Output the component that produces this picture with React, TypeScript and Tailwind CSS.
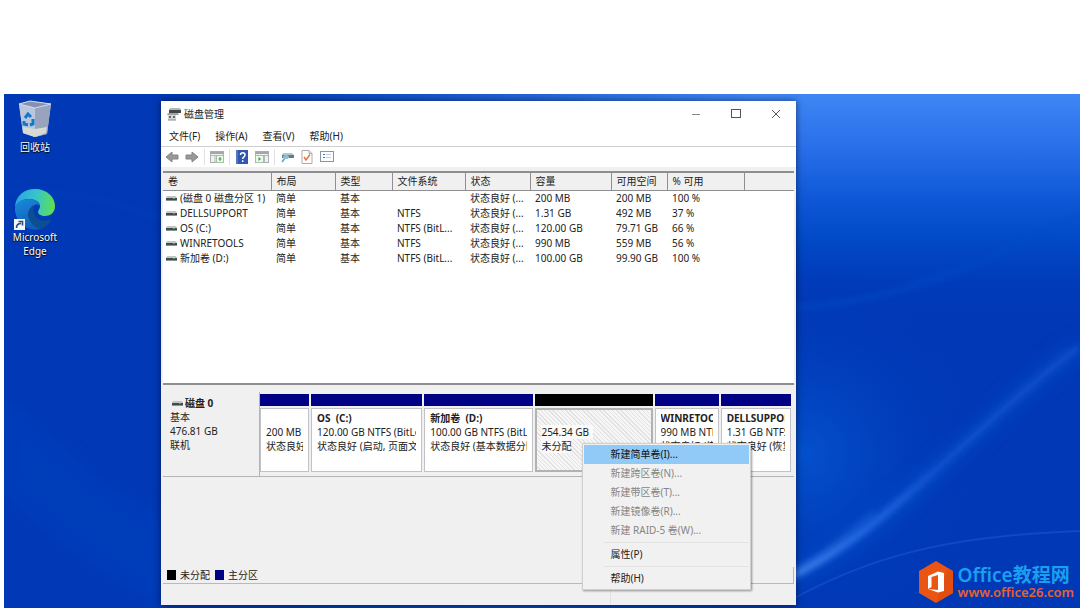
import React from "react";

type Volume = {
  name: string;
  layout: string;
  type: string;
  fs: string;
  status: string;
  capacity: string;
  free: string;
  percent: string;
};

const volumes: Volume[] = [
  { name: "(磁盘 0 磁盘分区 1)", layout: "简单", type: "基本", fs: "", status: "状态良好 (...", capacity: "200 MB", free: "200 MB", percent: "100 %" },
  { name: "DELLSUPPORT", layout: "简单", type: "基本", fs: "NTFS", status: "状态良好 (...", capacity: "1.31 GB", free: "492 MB", percent: "37 %" },
  { name: "OS (C:)", layout: "简单", type: "基本", fs: "NTFS (BitL...", status: "状态良好 (...", capacity: "120.00 GB", free: "79.71 GB", percent: "66 %" },
  { name: "WINRETOOLS", layout: "简单", type: "基本", fs: "NTFS", status: "状态良好 (...", capacity: "990 MB", free: "559 MB", percent: "56 %" },
  { name: "新加卷 (D:)", layout: "简单", type: "基本", fs: "NTFS (BitL...", status: "状态良好 (...", capacity: "100.00 GB", free: "99.90 GB", percent: "100 %" },
];

const columns = [
  { label: "卷", width: "w-[108px]" },
  { label: "布局", width: "w-16" },
  { label: "类型", width: "w-[57px]" },
  { label: "文件系统", width: "w-[73px]" },
  { label: "状态", width: "w-[65px]" },
  { label: "容量", width: "w-[81px]" },
  { label: "可用空间", width: "w-14" },
  { label: "% 可用", width: "w-[77px]" },
  { label: "", width: "" },
];

function Wallpaper() {
  return (
    <svg className="absolute inset-0 h-full w-full" viewBox="0 0 1076 514" preserveAspectRatio="none" aria-hidden="true">
      <defs>
        <linearGradient id="sky" x1="0" y1="0" x2="0" y2="1">
          <stop offset="0" stopColor="#3f86f4" />
          <stop offset="0.1" stopColor="#2a70ea" />
          <stop offset="0.2" stopColor="#0f59d8" />
          <stop offset="0.27" stopColor="#024cca" />
          <stop offset="0.38" stopColor="#003cb9" stopOpacity="0.7" />
          <stop offset="0.5" stopColor="#0038b6" stopOpacity="0" />
        </linearGradient>
        <linearGradient id="skyFade" x1="0" y1="0" x2="1" y2="0">
          <stop offset="0.2" stopColor="#000" />
          <stop offset="0.7" stopColor="#fff" />
        </linearGradient>
        <mask id="skyMask">
          <rect width="1076" height="514" fill="url(#skyFade)" />
        </mask>
        <radialGradient id="glow">
          <stop offset="0" stopColor="#0450cc" />
          <stop offset="1" stopColor="#0038b6" stopOpacity="0" />
        </radialGradient>
        <linearGradient id="beam" gradientUnits="userSpaceOnUse" x1="780" y1="490" x2="1076" y2="250">
          <stop offset="0" stopColor="#5a9fff" />
          <stop offset="0.25" stopColor="#2f78ee" />
          <stop offset="0.5" stopColor="#0f55d0" />
          <stop offset="1" stopColor="#0a50cc" />
        </linearGradient>
        <filter id="soft" x="-20%" y="-20%" width="140%" height="140%">
          <feGaussianBlur stdDeviation="3" />
        </filter>
        <filter id="wide" x="-20%" y="-20%" width="140%" height="140%">
          <feGaussianBlur stdDeviation="9" />
        </filter>
      </defs>
      <rect width="1076" height="514" fill="#0038b5" />
      <rect width="1076" height="514" fill="url(#sky)" mask="url(#skyMask)" />
      <ellipse cx="800" cy="360" rx="190" ry="190" fill="url(#glow)" />
      <ellipse cx="500" cy="530" rx="320" ry="60" fill="url(#glow)" />
      <path d="M780 214 C880 210 960 180 1076 120" fill="none" stroke="#0a4cc6" strokeWidth="3" filter="url(#soft)" />
      <path d="M0 96 C60 96 110 106 160 126" fill="none" stroke="#0844c0" strokeWidth="3" opacity="0.6" filter="url(#soft)" />
      <path d="M0 300 C40 330 80 390 160 420 L160 514 C100 480 40 440 0 400Z" fill="#0648c4" opacity="0.3" filter="url(#wide)" />
      <path d="M780 486 C880 440 960 340 1076 252" fill="none" stroke="#0b55d2" strokeWidth="16" opacity="0.5" filter="url(#wide)" />
      <path d="M780 486 C880 440 960 340 1076 252" fill="none" stroke="url(#beam)" strokeWidth="5" filter="url(#soft)" />
      <path d="M785 478 C815 464 835 448 870 418" fill="none" stroke="#4a92ff" strokeWidth="2" opacity="0.6" filter="url(#soft)" />
      <path d="M780 510 C860 464 940 442 1076 437" fill="none" stroke="#1a5cd8" strokeWidth="2" opacity="0.5" />
    </svg>
  );
}

function RecycleBin() {
  return (
    <svg width="34" height="38" viewBox="0 0 34 38" aria-hidden="true">
      <path d="M1 4 L12 1 L33 4 L29 34 L17 37 L5 33Z" fill="#aeb9cf" />
      <path d="M1 4 L17 8 L17 37 L5 33Z" fill="#b9c6de" />
      <path d="M17 8 L33 4 L29 34 L17 37Z" fill="#98a4bd" />
      <path d="M1 4 L12 1 L33 4 L17 8Z" fill="#8391b2" stroke="#d3dcec" strokeWidth="1" />
      <path d="M5 27 L17 29 L29 27 L28 33 L17 37 L5 33Z" fill="#d9d9d4" />
      <g fill="none" stroke="#1279c9" strokeWidth="3">
        <path d="M7 18 L10 14 L13 17" />
        <path d="M15 19 L15 24 L12 25" />
        <path d="M10 25 L6 24 L6 21" />
      </g>
    </svg>
  );
}

function EdgeLogo() {
  return (
    <svg width="42" height="42" viewBox="0 0 42 42" aria-hidden="true">
      <defs>
        <linearGradient id="edgeTop" x1="0" y1="0.4" x2="1" y2="0.5">
          <stop offset="0" stopColor="#2aa5e0" />
          <stop offset="0.5" stopColor="#35c4cd" />
          <stop offset="1" stopColor="#5fe04f" />
        </linearGradient>
        <linearGradient id="edgeLeft" x1="0" y1="0" x2="0.4" y2="1">
          <stop offset="0" stopColor="#1a8bdd" />
          <stop offset="1" stopColor="#0f5fb9" />
        </linearGradient>
      </defs>
      <path d="M1 20 C1 8 10 1 21 1 C33 1 41 9 41 18 C41 25 36 28 31 28 C27 28 24 26 24 24 C24 22 26 21 26 18 C26 14 21 11 15 11 C8 11 2 15 1 20Z" fill="url(#edgeTop)" />
      <path d="M1 20 C2 14 8 11 15 11 C21 11 26 14 26 18 C25 17 23 16 21 17 C16 18 14 24 16 30 C18 36 22 40 27 41 C12 44 1 34 1 20Z" fill="url(#edgeLeft)" />
      <path d="M21 17 C16 18 12 25 15 31 C18 38 24 41 27 41 C32 39 36 35 38 31 C34 33 24 34 21 27 C19 23 20 19 21 17Z" fill="#0b4f92" />
    </svg>
  );
}

function DriveIcon() {
  return (
    <svg className="shrink-0" width="11" height="5" viewBox="0 0 11 5" aria-hidden="true">
      <path d="M1 0 H10 L11 2 H0Z" fill="#c0c8c6" />
      <rect y="2" width="11" height="2" fill="#414b49" />
      <rect y="4" width="11" height="1" fill="#8b9492" />
      <rect x="7" y="2" width="2" height="1" fill="#4fa56a" />
    </svg>
  );
}

function AppIcon() {
  return (
    <svg width="14" height="14" viewBox="0 0 14 14" aria-hidden="true">
      <path d="M3 1 H13 L14 3 H2Z" fill="#b5b8ba" />
      <rect x="2" y="3" width="12" height="3" fill="#42474a" />
      <path d="M1 6 H11 L12 8 H0Z" fill="#a0a4a6" />
      <rect x="1" y="8" width="8" height="5" fill="#d5d7d8" />
      <rect x="2" y="9" width="2" height="2" fill="#63686b" />
      <rect x="6" y="9" width="2" height="2" fill="#63686b" />
      <path d="M1 13 H9" stroke="#85898b" />
    </svg>
  );
}

function Arrow({ forward = false }: { forward?: boolean }) {
  return (
    <svg width="14" height="12" viewBox="0 0 14 12" aria-hidden="true">
      <path
        d={forward ? "M13 6 L7 1 V4 H1 V8 H7 V11Z" : "M1 6 L7 1 V4 H13 V8 H7 V11Z"}
        fill="#999"
        stroke="#858585"
        strokeWidth="1"
        strokeLinejoin="round"
      />
    </svg>
  );
}

function TreeIcon() {
  return (
    <svg width="14" height="12" viewBox="0 0 14 12" aria-hidden="true">
      <rect x="0.5" y="0.5" width="13" height="11" fill="#f0f1f1" stroke="#aaadb0" />
      <rect x="1" y="1" width="12" height="2" fill="#a3a7aa" />
      <path d="M1 4.5 H13 M5 4 V11" stroke="#b5b9bc" />
      <rect x="6.500" y="4.500" width="7" height="7" fill="#eef8ee" stroke="#9cc5a0" />
      <path d="M10 6 V10 M8.500 8 H11.500" stroke="#3e9a49" />
    </svg>
  );
}

function ActionPaneIcon() {
  return (
    <svg width="14" height="12" viewBox="0 0 14 12" aria-hidden="true">
      <rect x="0.5" y="0.5" width="13" height="11" fill="#f0f1f1" stroke="#aaadb0" />
      <rect x="1" y="1" width="12" height="2" fill="#a3a7aa" />
      <path d="M1 4.5 H13 M9.500 4 V11" stroke="#b5b9bc" />
      <rect x="0.5" y="4.500" width="8" height="7" fill="#eef8ee" stroke="#9cc5a0" />
      <path d="M3.500 6 L6 8 L3.500 10Z" fill="#3e9a49" />
    </svg>
  );
}

function HelpIcon() {
  return (
    <svg width="12" height="14" viewBox="0 0 12 14" aria-hidden="true">
      <rect width="12" height="14" fill="#3158ae" />
      <rect width="2" height="14" fill="#5475bf" />
      <path d="M4.500 5 C4.500 2 9 2 9 5 C9 7 6.700 6.800 6.700 9 M6.700 10.200 V12" fill="none" stroke="#fff" strokeWidth="1.500" />
    </svg>
  );
}

function RescanIcon() {
  return (
    <svg width="14" height="12" viewBox="0 0 14 12" aria-hidden="true">
      <path d="M3 2 H12 L14 4 H2Z" fill="#b5c6cf" />
      <rect x="2" y="4" width="12" height="3" fill="#5f7c8b" />
      <path d="M5 7 L2 11" stroke="#78abc6" strokeWidth="2" />
      <ellipse cx="6" cy="6" rx="3" ry="2" fill="#8fbdd2" />
    </svg>
  );
}

function CheckPageIcon() {
  return (
    <svg width="12" height="14" viewBox="0 0 12 14" aria-hidden="true">
      <path d="M1 0.5 H8 L11 3.500 V13.500 H1Z" fill="#fff" stroke="#b0aba8" />
      <path d="M8 0.5 V3.500 H11" fill="#ddd" stroke="#b0aba8" />
      <path d="M3 7 L5 10 L9 4.500" fill="none" stroke="#e2783f" strokeWidth="1.500" />
    </svg>
  );
}

function ListIcon() {
  return (
    <svg width="14" height="12" viewBox="0 0 14 12" aria-hidden="true">
      <rect x="0.5" y="0.5" width="13" height="10" fill="#fbfcfd" stroke="#8598a8" />
      <path d="M3 3.500 H5 M3 6.500 H5" stroke="#4479a8" />
      <path d="M6 3.500 H11 M6 6.500 H11" stroke="#c5ced6" />
    </svg>
  );
}

function ToolButton({ label, children }: { label: string; children: React.ReactNode }) {
  return (
    <button type="button" aria-label={label} className="flex h-4 w-5 items-center justify-center">
      {children}
    </button>
  );
}

function Divider() {
  return <span className="mx-0.5 h-4 w-px bg-[#e2e2e2]" />;
}

function DesktopShortcut({ label, children }: { label: string; children: React.ReactNode }) {
  return (
    <button
      type="button"
      className="flex w-[62px] flex-col items-center text-center text-[10px] leading-[14px] text-white [text-shadow:0_1px_1px_#000,1px_0_1px_#0008]"
    >
      {children}
      <span>{label}</span>
    </button>
  );
}

type BlockProps = {
  title?: string;
  size: string;
  status: string;
  unallocated?: boolean;
  children?: React.ReactNode;
};

function PartitionBlock({ title, size, status, unallocated = false, children }: BlockProps) {
  return (
    <div className="relative flex flex-col">
      <div className={unallocated ? "h-3 bg-black" : "h-3 bg-[#000084]"} />
      <div
        className={
          unallocated
            ? "mt-0.5 h-16 overflow-hidden border-2 border-[#b2b2b2] bg-[repeating-linear-gradient(45deg,#f6f6f6_0_2px,#e2e2e2_2px_3px)] pt-px pl-1 leading-[14px] whitespace-nowrap"
            : "mt-0.5 h-16 border border-[#c2c2c6] bg-white px-[5px] pt-0.5 leading-[14px] whitespace-nowrap"
        }
      >
        <div className="overflow-hidden">
          <div className="h-3.5 font-bold whitespace-pre">{title}</div>
          <div>
            <span className={unallocated ? "bg-[#fafafa] pr-1" : ""}>{size}</span>
          </div>
          <div>
            <span className={unallocated ? "bg-[#fafafa]" : ""}>{status}</span>
          </div>
        </div>
      </div>
      {children}
    </div>
  );
}

function MenuItem({ label, active = false, disabled = false }: { label: string; active?: boolean; disabled?: boolean }) {
  return (
    <button
      type="button"
      role="menuitem"
      disabled={disabled}
      className={
        active
          ? "flex h-[19px] w-full items-center bg-[#91c9f7] pl-[26px] text-[#111]"
          : "flex h-[19px] w-full items-center pl-[26px] text-[#222] disabled:text-[#858585]"
      }
    >
      {label}
    </button>
  );
}

function ContextMenu() {
  return (
    <div
      role="menu"
      className="absolute top-[49px] left-[47px] z-10 w-[169px] border border-[#d0d0d0] bg-[#f1f1f2] p-px shadow-[1px_1px_2px_#0006]"
    >
      <MenuItem label="新建简单卷(I)..." active />
      <MenuItem label="新建跨区卷(N)..." disabled />
      <MenuItem label="新建带区卷(T)..." disabled />
      <MenuItem label="新建镜像卷(R)..." disabled />
      <MenuItem label="新建 RAID-5 卷(W)..." disabled />
      <div className="my-0.5 ml-5 h-px bg-[#e3e3e3]" />
      <MenuItem label="属性(P)" />
      <div className="my-0.5 ml-5 h-px bg-[#e3e3e3]" />
      <MenuItem label="帮助(H)" />
    </div>
  );
}

function VolumeTable() {
  return (
    <div className="h-[212px] border-t-2 border-[#8e8e90] bg-white">
      <table className="w-full table-fixed border-collapse text-left leading-[15px]">
        <thead>
          <tr className="h-[17px] bg-[#f0f0f1]">
            {columns.map((c, i) => (
              <th
                key={i}
                scope="col"
                className={`${c.width} border-r border-b border-[#8f8f91] pl-[5px] font-normal whitespace-nowrap last:border-r-0`}
              >
                {c.label}
              </th>
            ))}
          </tr>
        </thead>
        <tbody>
          {volumes.map((v) => (
            <tr key={v.name} className="h-[15px] whitespace-nowrap [&>td]:pl-[5px]">
              <td>
                <span className="-ml-0.5 flex items-center gap-[3px]">
                  <DriveIcon />
                  {v.name}
                </span>
              </td>
              <td>{v.layout}</td>
              <td>{v.type}</td>
              <td>{v.fs}</td>
              <td>{v.status}</td>
              <td>{v.capacity}</td>
              <td>{v.free}</td>
              <td>{v.percent}</td>
              <td />
            </tr>
          ))}
        </tbody>
      </table>
    </div>
  );
}

function DiskRow() {
  return (
    <section className="flex border-b border-[#b5b5b8]" aria-label="磁盘 0">
      <div className="w-[97px] border-r border-[#b5b5b8] pt-1 pl-[7px] leading-[14px]">
        <h2 className="flex items-center gap-0.5 pl-0.5 font-bold">
          <DriveIcon />
          磁盘 0
        </h2>
        <p>基本</p>
        <p>476.81 GB</p>
        <p>联机</p>
      </div>
      <div className="grid min-w-0 flex-1 grid-cols-[49fr_111fr_109fr_117fr_64fr_70fr] gap-0.5 pt-0.5 pr-[3px] pb-1 [&>*]:min-w-0">
        <PartitionBlock size="200 MB" status="状态良好 (EFI" />
        <PartitionBlock title="OS  (C:)" size="120.00 GB NTFS (BitLocker" status="状态良好 (启动, 页面文件" />
        <PartitionBlock title="新加卷  (D:)" size="100.00 GB NTFS (BitLocker" status="状态良好 (基本数据分区)" />
        <PartitionBlock size="254.34 GB" status="未分配" unallocated>
          <ContextMenu />
        </PartitionBlock>
        <PartitionBlock title="WINRETOOLS" size="990 MB NTFS" status="状态良好 (恢复分区)" />
        <PartitionBlock title="DELLSUPPORT" size="1.31 GB NTFS" status="状态良好 (恢复分区)" />
      </div>
    </section>
  );
}

function DiskManagementWindow() {
  return (
    <div className="relative mt-[7px] mb-[3px] flex w-[59%] flex-col bg-white text-[10px] text-[#222] shadow-[0_0_7px_#0008]">
      <header className="flex h-[26px] items-center pl-1.5">
        <AppIcon />
        <h1 className="ml-[3px] flex-1">磁盘管理</h1>
        <button type="button" aria-label="最小化" className="flex h-full w-10 items-center justify-center">
          <svg width="10" height="10" viewBox="0 0 10 10" stroke="#888"><path d="M1 5.500 H9" /></svg>
        </button>
        <button type="button" aria-label="最大化" className="flex h-full w-10 items-center justify-center">
          <svg width="10" height="10" viewBox="0 0 10 10" fill="none" stroke="#555"><rect x="0.5" y="0.5" width="9" height="8" /></svg>
        </button>
        <button type="button" aria-label="关闭" className="flex h-full w-10 items-center justify-center">
          <svg width="10" height="10" viewBox="0 0 10 10" stroke="#555"><path d="M1 1 L9 9 M9 1 L1 9" /></svg>
        </button>
      </header>
      <nav className="flex h-5 items-center gap-[15px] border-b border-[#cfcfcf] pl-2">
        <button type="button">文件(F)</button>
        <button type="button">操作(A)</button>
        <button type="button">查看(V)</button>
        <button type="button">帮助(H)</button>
      </nav>
      <div className="flex h-5 items-center pl-px">
        <ToolButton label="后退"><Arrow /></ToolButton>
        <ToolButton label="前进"><Arrow forward /></ToolButton>
        <Divider />
        <ToolButton label="控制台树"><TreeIcon /></ToolButton>
        <Divider />
        <ToolButton label="帮助"><HelpIcon /></ToolButton>
        <ToolButton label="操作窗格"><ActionPaneIcon /></ToolButton>
        <Divider />
        <ToolButton label="重新扫描磁盘"><RescanIcon /></ToolButton>
        <ToolButton label="属性"><CheckPageIcon /></ToolButton>
        <ToolButton label="列表"><ListIcon /></ToolButton>
      </div>
      <div className="flex flex-1 flex-col bg-[#f0f0f1] px-0.5 pt-1">
        <VolumeTable />
        <div className="flex flex-1 flex-col border-t-2 border-[#8e8e90] pt-[7px]">
          <DiskRow />
          <footer className="mt-auto flex h-[17px] items-center gap-1 border-r border-b border-[#b9b9bb] pl-1">
            <span className="h-2.5 w-[9px] bg-black" />
            <span>未分配</span>
            <span className="ml-px h-2.5 w-[9px] bg-[#000084]" />
            <span>主分区</span>
          </footer>
        </div>
        <div className="flex h-[21px]">
          <span className="w-[71%] border-r border-[#e2e2e2]" />
        </div>
      </div>
    </div>
  );
}

function SiteBadge() {
  return (
    <a href="#office26" className="absolute right-1.5 bottom-[5px] flex items-center gap-1">
      <svg width="36" height="42" viewBox="0 0 36 42" aria-hidden="true">
        <path d="M18 0 L35 10 V32 L18 42 L1 32 V10Z" fill="#ea5514" />
        <path d="M18 42 L35 32 V10 L30 7 Z" fill="#d9480f" opacity="0.5" />
        <path fillRule="evenodd" d="M10 15 L20 10.500 L26 12 V30 L20 31.500 L10 28 L20 29 V14 L13.500 16 V26 L10 28Z" fill="#fff" />
      </svg>
      <span className="flex flex-col">
        <span className="text-[19px] leading-5 font-semibold text-[#1a9ff0]">Office教程网</span>
        <span className="text-[13px] leading-[14px] font-semibold text-[#e8602c]">www.office26.com</span>
      </span>
    </a>
  );
}

export default function App() {
  return (
    <div className="flex min-h-screen flex-col bg-white pt-[94px] pl-1 font-['Noto_Sans','Noto_Sans_CJK_SC',sans-serif]">
      <main className="relative flex flex-1 overflow-hidden">
        <Wallpaper />
        <div className="relative flex w-[157px] flex-col gap-[34px] pt-1.5">
          <DesktopShortcut label="回收站">
            <RecycleBin />
            <span className="h-0.5" />
          </DesktopShortcut>
          <DesktopShortcut label="Microsoft Edge">
            <span className="relative">
              <EdgeLogo />
              <svg className="absolute bottom-0 left-0" width="11" height="11" viewBox="0 0 11 11" aria-hidden="true">
                <rect width="11" height="11" fill="#f5f5f5" />
                <path d="M2.500 9 C2.500 6 4 4.500 7 4.500 M4.500 2.500 H8.500 V6.500" fill="none" stroke="#234c86" strokeWidth="1.600" />
              </svg>
            </span>
          </DesktopShortcut>
        </div>
        <DiskManagementWindow />
        <SiteBadge />
      </main>
    </div>
  );
}
